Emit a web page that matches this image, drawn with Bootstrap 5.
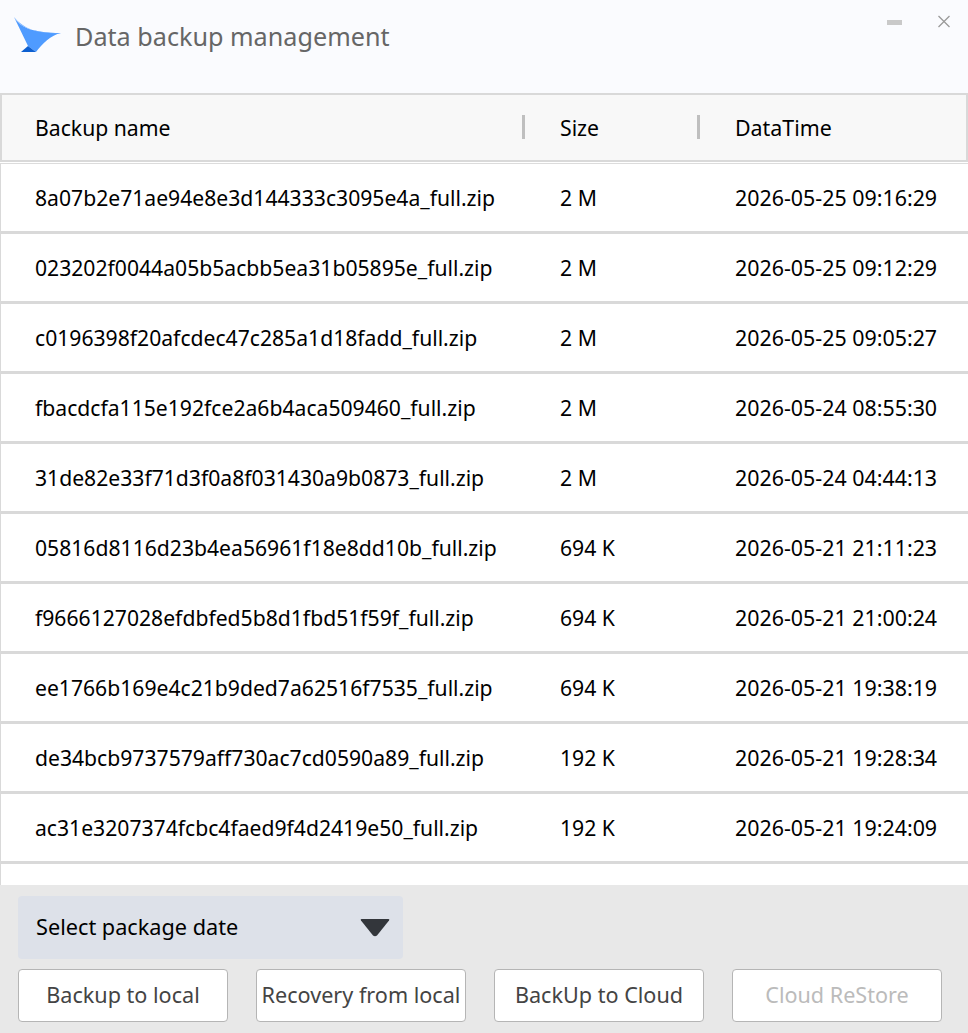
<!DOCTYPE html>
<html lang="en">
<head>
  <meta charset="UTF-8">
  <title>Data backup management</title>
  <link href="https://cdn.jsdelivr.net/npm/bootstrap@5.3.2/dist/css/bootstrap.min.css" rel="stylesheet">
  <style>
    html, body { height: 100%; overflow: hidden; }
    body { font-family: "Noto Sans", sans-serif; font-size: 21.2px; color: #000; background: #fff; }
    .win { height: 1033px; }
    .titlebar { height: 93px; background: #fafbfe; padding-left: 14px; }
    .titlebar svg.logo { margin-top: 17px; }
    .titletext { font-size: 25.2px; color: #666; margin-left: 13px; margin-top: 18px; line-height: 37px; }
    .winbtns { position: absolute; top: 13px; right: 17px; gap: 34px; }
    .thead-bar { height: 69px; background: #f8f8f8; border: 2px solid #d9d9d9; }
    .cell-name { width: 523px; padding-left: 33px; }
    .cell-size { width: 175px; padding-left: 35px; }
    .cell-date { padding-left: 35px; font-size: 21.4px; }
    .thead-bar .cell-name, .thead-bar .cell-size { border-right: 3px solid #bfbfbf; height: 24px; line-height: 24px; padding-top: 1px; }
    .thead-bar .cell-date { line-height: 24px; padding-top: 1px; }
    .rows { height: 723px; overflow: hidden; border-left: 1px solid #d9d9d9; border-top: 1px solid #dcdcdc; margin-top: 1px; }
    .data-row { height: 70px; padding-top: 2px; border-bottom: 3px solid #d9d9d9; background: #fff; }
    .rows .cell-name { padding-left: 34px; font-size: 21.15px; }
    .rows .cell-size { padding-left: 36px; }
    .rows .cell-date { padding-left: 36px; }
    .foot { height: 148px; background: #e8e8e8; padding: 11px 18px 0; }
    .date-pick { width: 385px; height: 63px; background: #dde1e9; border-radius: 4px; padding: 0 13px 0 18px; font-size: 21.7px; }
    .btn-line { margin-top: 10px; gap: 28px; }
    .btn.foot-btn { width: 210px; height: 53px; padding: 0; font-size: 21.6px; background: #fff; color: #444; border: 1px solid #b5b5b5; border-radius: 4px; white-space: nowrap; }
    .btn.foot-btn:disabled { color: #bbb; background: #fff; border-color: #b5b5b5; opacity: 1; }
  </style>
</head>
<body>
  <div class="win d-flex flex-column position-relative">
    <div class="titlebar d-flex align-items-start">
      <svg class="logo" width="48" height="38" viewBox="0 0 48 38">
        <path d="M0 0 C5 9 16 16 47 16 C37 18 28 27 22 35 L14 29 Z" fill="#4f9bff"/>
        <path d="M0 0 C5 9 16 16 47 16 C28 17.500 10 13 0 0 Z" fill="#78b2ff"/>
        <path d="M14 29 L7 35 L22 35 Z" fill="#0d5fd0"/>
      </svg>
      <div class="titletext">Data backup management</div>
    </div>
    <div class="winbtns d-flex align-items-center">
      <svg width="16" height="18" viewBox="0 0 16 18"><rect x="0" y="7" width="15" height="5" fill="#c9c9c9"/></svg>
      <svg width="14" height="18" viewBox="0 0 14 18"><path d="M1.500 3 L12.500 14 M12.500 3 L1.500 14" stroke="#9a9a9a" stroke-width="1.300" fill="none"/></svg>
    </div>

    <div class="thead-bar d-flex align-items-center">
      <div class="cell-name">Backup name</div>
      <div class="cell-size">Size</div>
      <div class="cell-date">DataTime</div>
    </div>

    <div class="rows" id="rows"></div>

    <div class="foot">
      <div class="date-pick d-flex align-items-center justify-content-between">
        <span>Select package date</span>
        <svg width="30" height="20" viewBox="0 0 30 20"><path d="M1.500 1 H28.500 Q30 1 29 2.500 L17 17.500 Q15 19 13 17.500 L1 2.500 Q0 1 1.500 1 Z" fill="#33363b"/></svg>
      </div>
      <div class="btn-line d-flex">
        <button class="btn foot-btn">Backup to local</button>
        <button class="btn foot-btn">Recovery from local</button>
        <button class="btn foot-btn">BackUp to Cloud</button>
        <button class="btn foot-btn" disabled>Cloud ReStore</button>
      </div>
    </div>
  </div>

  <script src="https://cdn.jsdelivr.net/npm/bootstrap@5.3.2/dist/js/bootstrap.bundle.min.js"></script>
  <script>
    let backups = [
      ["8a07b2e71ae94e8e3d144333c3095e4a_full.zip", "2 M", "2026-05-25 09:16:29"],
      ["023202f0044a05b5acbb5ea31b05895e_full.zip", "2 M", "2026-05-25 09:12:29"],
      ["c0196398f20afcdec47c285a1d18fadd_full.zip", "2 M", "2026-05-25 09:05:27"],
      ["fbacdcfa115e192fce2a6b4aca509460_full.zip", "2 M", "2026-05-24 08:55:30"],
      ["31de82e33f71d3f0a8f031430a9b0873_full.zip", "2 M", "2026-05-24 04:44:13"],
      ["05816d8116d23b4ea56961f18e8dd10b_full.zip", "694 K", "2026-05-21 21:11:23"],
      ["f9666127028efdbfed5b8d1fbd51f59f_full.zip", "694 K", "2026-05-21 21:00:24"],
      ["ee1766b169e4c21b9ded7a62516f7535_full.zip", "694 K", "2026-05-21 19:38:19"],
      ["de34bcb9737579aff730ac7cd0590a89_full.zip", "192 K", "2026-05-21 19:28:34"],
      ["ac31e3207374fcbc4faed9f4d2419e50_full.zip", "192 K", "2026-05-21 19:24:09"],
      ["", "", ""]
    ];
    let lista = document.getElementById("rows");
    for (let b of backups) {
      let row = document.createElement("div");
      row.className = "data-row d-flex align-items-center";
      row.innerHTML = `<div class="cell-name">${b[0]}</div><div class="cell-size">${b[1]}</div><div class="cell-date">${b[2]}</div>`;
      lista.appendChild(row);
    }
  </script>
</body>
</html>
